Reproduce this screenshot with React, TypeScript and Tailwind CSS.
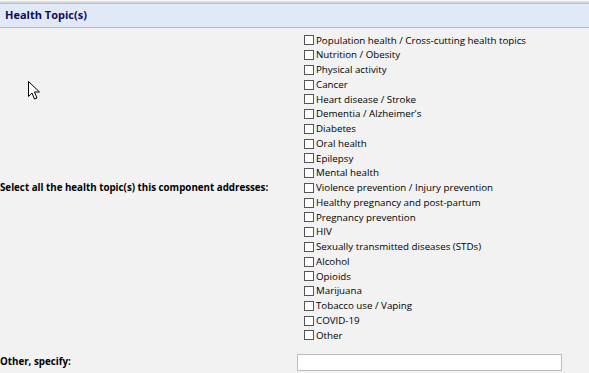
import React from "react";

const topics = [
  "Population health / Cross-cutting health topics",
  "Nutrition / Obesity",
  "Physical activity",
  "Cancer",
  "Heart disease / Stroke",
  "Dementia / Alzheimer's",
  "Diabetes",
  "Oral health",
  "Epilepsy",
  "Mental health",
  "Violence prevention / Injury prevention",
  "Healthy pregnancy and post-partum",
  "Pregnancy prevention",
  "HIV",
  "Sexually transmitted diseases (STDs)",
  "Alcohol",
  "Opioids",
  "Marijuana",
  "Tobacco use / Vaping",
  "COVID-19",
  "Other",
];

export default function App() {
  return (
    <div
      className="relative w-[589px] h-[373px] overflow-hidden bg-[#f2f2f2] text-[#000]"
      style={{ fontFamily: '"Open Sans", "Liberation Sans", sans-serif' }}
    >
      <div className="h-[1px] bg-[#fafafa]" />
      <div className="h-[2px] bg-[#dcdcdc]" />
      {/* header */}
      <div className="h-[25px] bg-[#e1e8f7] border-y border-[#a8bde6] flex items-center pl-[5px]">
        <span className="text-[11px] font-bold text-[#0c0c5a]">Health Topic(s)</span>
      </div>

      {/* topics row */}
      <div className="flex mt-[5px]">
        <div className="w-[302px] flex items-center">
          <span className="text-[9.75px] font-bold">
            Select all the health topic(s) this component addresses:
          </span>
        </div>
        <div className="flex flex-col pl-[2px]">
          {topics.map((t) => (
            <label key={t} className="flex items-center h-[14.75px] gap-[2px]">
              <span className="w-[10px] h-[10px] border border-[#555] bg-white" />
              <span className="text-[9.75px] leading-none">{t}</span>
            </label>
          ))}
        </div>
      </div>

      {/* other row */}
      <div className="flex items-center mt-[11px]">
        <div className="w-[297px] text-[9.75px] font-bold">Other, specify:</div>
        <div className="w-[265px] h-[17px] bg-white border border-[#bdbdbd]" />
      </div>

      {/* mouse cursor */}
      <svg
        className="absolute left-[28px] top-[81px]"
        width="13"
        height="20"
        viewBox="0 0 13 20"
      >
        <path
          d="M0.5 0.5 L0.5 15.5 L4 12 L6.5 18 L9 17 L6.5 11 L11.5 11 Z"
          fill="#fff"
          stroke="#000"
          strokeWidth="1"
          strokeLinejoin="miter"
        />
      </svg>
    </div>
  );
}
